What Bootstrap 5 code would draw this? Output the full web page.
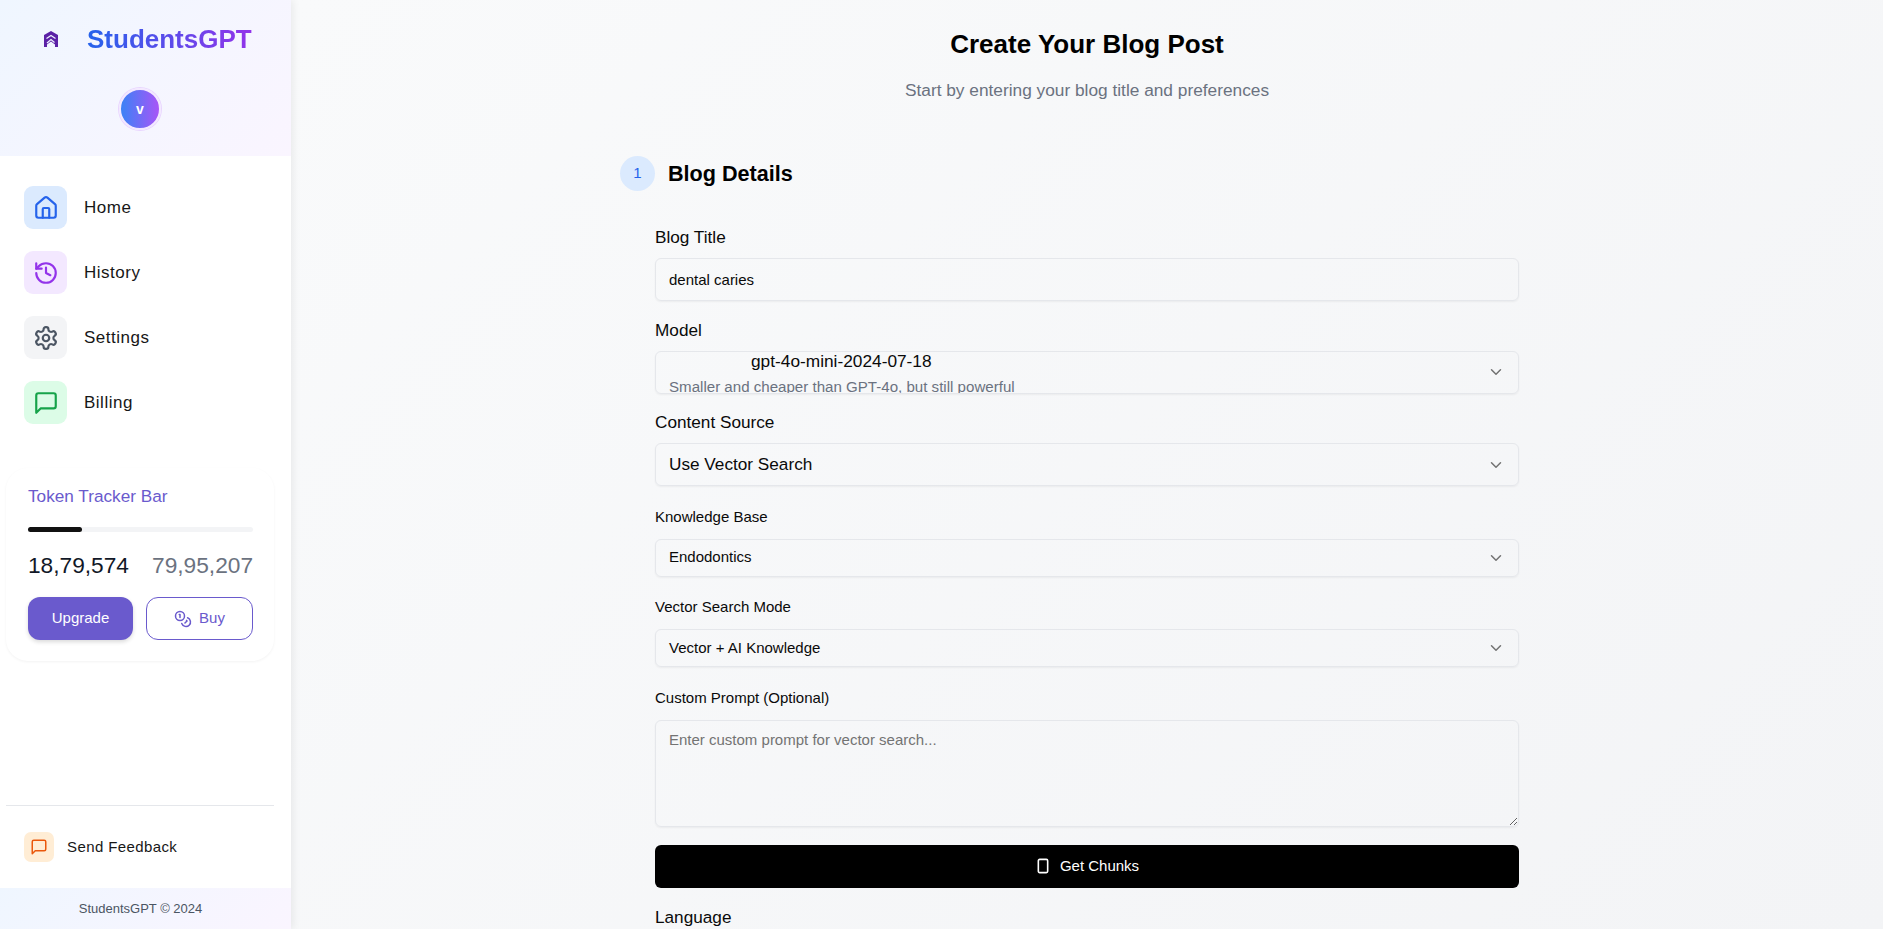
<!DOCTYPE html>
<html lang="en">
<head>
  <meta charset="UTF-8">
  <title>StudentsGPT</title>
  <link rel="stylesheet" href="https://cdn.jsdelivr.net/npm/bootstrap@5.3.3/dist/css/bootstrap.min.css">
  <style>
    html, body { height: 100%; }
    body { font-family: "Liberation Sans", Arial, sans-serif; color: #0a0a0a; overflow: hidden; background: #f6f7f9; }
    .app-shell { height: 929px; }
    .side-panel { width: 291px; flex: 0 0 291px; background: #fff; box-shadow: 2px 0 8px rgba(0,0,0,.07); z-index: 2; }
    .side-head { height: 156px; background: linear-gradient(135deg, #eff6ff, #faf5ff); padding-top: 20px; }
    .logo-line { height: 38px; padding-left: 44px; gap: 29px; }
    .logo-text { font-size: 26px; line-height: 38px; font-weight: 700; background: linear-gradient(90deg, #2563eb, #9333ea); -webkit-background-clip: text; background-clip: text; color: transparent; }
    .user-dot { width: 42px; height: 42px; margin: 30px 0 0 119px; border-radius: 50%; background: linear-gradient(90deg, #3b82f6, #a855f7); border: 2px solid #f3e8ff; box-shadow: 0 0 0 1px #e9d5ff; color: #fff; font-size: 14px; font-weight: 700; }
    .side-links { padding: 30px 24px 0 24px; gap: 22px; }
    .side-link { color: #171717; font-size: 17px; letter-spacing: .5px; gap: 17px; text-decoration: none; }
    .icon-tile { width: 43px; height: 43px; border-radius: 9px; }
    .tile-blue { background: #dbeafe; color: #2563eb; }
    .tile-purple { background: #f3e8ff; color: #9333ea; }
    .tile-gray { background: #f3f4f6; color: #4b5563; }
    .tile-green { background: #dcfce7; color: #16a34a; }
    .token-box { margin: 44px 0 0 6px; width: 268px; height: 193px; padding: 18px 21px 18px 22px; border-radius: 22px; background: #fff; box-shadow: 0 1px 3px rgba(0,0,0,.05); }
    .token-title { color: #6a5acd; font-size: 17.2px; line-height: 20px; }
    .token-track { height: 5px; margin-top: 20.5px; background: #f3f4f6; border-radius: 3px; }
    .token-fill { background: #111; border-radius: 3px; }
    .token-nums { font-size: 22.7px; line-height: 28px; margin-top: 19px; color: #111827; }
    .token-max { color: #6b7280; }
    .token-btns { margin-top: 18.5px; gap: 13px; }
    .btn-upgrade { width: 105px; height: 43px; background: #6a5acd; border: 0; border-radius: 12px; color: #fff; font-size: 15px; font-weight: 400; box-shadow: 0 2px 4px rgba(0,0,0,.15); }
    .btn-buy { width: 107px; height: 43px; background: #fff; border: 1px solid #6a5acd; border-radius: 12px; color: #6a5acd; font-size: 15px; gap: 7px; }
    .side-bottom { margin-top: auto; }
    .side-rule { margin: 0 17px 0 6px; border-top: 1px solid #e5e7eb; }
    .feedback-link { padding: 26px 24px; gap: 13px; color: #171717; font-size: 15px; letter-spacing: .4px; height: 82px; text-decoration: none; }
    .tile-orange { width: 30px; height: 30px; border-radius: 7px; background: #ffedd5; color: #ea580c; }
    .side-foot { height: 41px; padding-right: 10px; background: linear-gradient(135deg, #eff6ff, #faf5ff); color: #4b5563; font-size: 13px; }
    .main-area { background: linear-gradient(135deg, #f9fafb, #f3f4f6); min-width: 0; }
    .page-title { font-size: 26px; line-height: 32px; font-weight: 700; margin: 28px 0 0 0; color: #000; }
    .page-sub { font-size: 17.3px; line-height: 24px; color: #6b7280; margin: 18px 0 0 0; }
    .form-wrap { width: 934px; margin: 54px auto 0 auto; }
    .step-row { margin-bottom: 34px; }
    .step-dot { width: 35px; height: 35px; border-radius: 50%; background: #dbeafe; color: #2563eb; font-size: 15px; }
    .step-title { font-size: 21.6px; line-height: 28px; font-weight: 700; margin: 0 0 0 13px; color: #000; }
    .form-body { margin: 0 35px; }
    .field-group { margin-bottom: 16.5px; }
    .field-group-sm { margin-bottom: 20.5px; }
    .field-label { font-size: 17.2px; line-height: 24px; margin-bottom: 9px; color: #0a0a0a; display: block; }
    .field-label-sm { font-size: 15px; line-height: 20px; margin-bottom: 12px; color: #0a0a0a; display: block; }
    .field-input { height: 43px; background: transparent; border: 1px solid #e5e7eb; border-radius: 6px; font-size: 15px; padding: 0 13px; color: #0a0a0a; box-shadow: 0 1px 2px rgba(0,0,0,.05); }
    .pick-box { display: flex; align-items: center; justify-content: space-between; width: 100%; height: 43px; background: transparent; border: 1px solid #e5e7eb; border-radius: 6px; padding: 0 13px; color: #0a0a0a; text-align: left; font-size: 15px; box-shadow: 0 1px 2px rgba(0,0,0,.05); }
    .pick-box svg { color: #737373; flex: none; }
    .pick-tall { overflow: hidden; }
    .pick-lines { display: block; align-self: flex-start; }
    .pick-name { display: block; font-size: 17.3px; line-height: 18px; padding-left: 82px; }
    .pick-desc { display: block; font-size: 15.1px; line-height: 15px; color: #6b7280; margin-top: 9px; }
    .pick-big { font-size: 17.2px; }
    .pick-small { height: 38px; }
    .field-area { height: 107px; background: transparent; border: 1px solid #e5e7eb; border-radius: 6px; font-size: 15px; padding: 8px 13px; box-shadow: 0 1px 2px rgba(0,0,0,.05); }
    .field-area::placeholder { color: #737373; }
    .area-group { margin-bottom: 18px; }
    .btn-chunks { height: 43px; background: #000; border: 0; border-radius: 6px; color: #fff; font-size: 15px; gap: 9px; }
    .lang-group { margin-top: 17.5px; }
  </style>
</head>
<body>
<div class="app-shell d-flex">
  <aside class="side-panel d-flex flex-column">
    <div class="side-head">
      <div class="logo-line d-flex align-items-center">
        <svg width="14" height="16" viewBox="0 0 14 16"><path fill="#5b21a6" d="M7 0 L14 4 V16 H11 V13.500 L7 10.500 L3 13.500 V16 H0 V4 Z"/><path fill="none" stroke="#eef2ff" stroke-width="1.300" d="M2.500 7.500 L7 4.500 L11.500 7.500 M3 12 L7 8.500 L10.500 11.500"/></svg>
        <span class="logo-text">StudentsGPT</span>
      </div>
      <div class="user-dot d-flex align-items-center justify-content-center">v</div>
    </div>
    <nav class="side-links d-flex flex-column">
      <a class="side-link d-flex align-items-center" href="#">
        <span class="icon-tile tile-blue d-flex align-items-center justify-content-center">
          <svg width="26" height="26" viewBox="0 0 24 24" fill="none" stroke="currentColor" stroke-width="2" stroke-linecap="round" stroke-linejoin="round"><path d="M15 21v-8a1 1 0 0 0-1-1h-4a1 1 0 0 0-1 1v8"/><path d="M3 10a2 2 0 0 1 .709-1.528l7-5.999a2 2 0 0 1 2.582 0l7 5.999A2 2 0 0 1 21 10v9a2 2 0 0 1-2 2H5a2 2 0 0 1-2-2z"/></svg>
        </span>Home</a>
      <a class="side-link d-flex align-items-center" href="#">
        <span class="icon-tile tile-purple d-flex align-items-center justify-content-center">
          <svg width="26" height="26" viewBox="0 0 24 24" fill="none" stroke="currentColor" stroke-width="2" stroke-linecap="round" stroke-linejoin="round"><path d="M3 12a9 9 0 1 0 9-9 9.750 9.750 0 0 0-6.740 2.740L3 8"/><path d="M3 3v5h5"/><path d="M12 7v5l4 2"/></svg>
        </span>History</a>
      <a class="side-link d-flex align-items-center" href="#">
        <span class="icon-tile tile-gray d-flex align-items-center justify-content-center">
          <svg width="26" height="26" viewBox="0 0 24 24" fill="none" stroke="currentColor" stroke-width="2" stroke-linecap="round" stroke-linejoin="round"><path d="M12.220 2h-.44a2 2 0 0 0-2 2v.18a2 2 0 0 1-1 1.730l-.43.250a2 2 0 0 1-2 0l-.15-.080a2 2 0 0 0-2.730.730l-.220.380a2 2 0 0 0 .730 2.730l.150.100a2 2 0 0 1 1 1.720v.510a2 2 0 0 1-1 1.740l-.150.090a2 2 0 0 0-.730 2.730l.220.380a2 2 0 0 0 2.730.730l.150-.080a2 2 0 0 1 2 0l.430.250a2 2 0 0 1 1 1.730V20a2 2 0 0 0 2 2h.44a2 2 0 0 0 2-2v-.18a2 2 0 0 1 1-1.730l.430-.250a2 2 0 0 1 2 0l.150.080a2 2 0 0 0 2.730-.730l.220-.390a2 2 0 0 0-.730-2.730l-.150-.080a2 2 0 0 1-1-1.740v-.500a2 2 0 0 1 1-1.740l.150-.090a2 2 0 0 0 .730-2.730l-.220-.380a2 2 0 0 0-2.730-.730l-.150.080a2 2 0 0 1-2 0l-.430-.250a2 2 0 0 1-1-1.730V4a2 2 0 0 0-2-2z"/><circle cx="12" cy="12" r="3"/></svg>
        </span>Settings</a>
      <a class="side-link d-flex align-items-center" href="#">
        <span class="icon-tile tile-green d-flex align-items-center justify-content-center">
          <svg width="26" height="26" viewBox="0 0 24 24" fill="none" stroke="currentColor" stroke-width="2" stroke-linecap="round" stroke-linejoin="round"><path d="M21 15a2 2 0 0 1-2 2H7l-4 4V5a2 2 0 0 1 2-2h14a2 2 0 0 1 2 2z"/></svg>
        </span>Billing</a>
    </nav>
    <div class="token-box">
      <div class="token-title">Token Tracker Bar</div>
      <div class="token-track d-flex"><div class="token-fill" style="width:24%"></div></div>
      <div class="token-nums d-flex justify-content-between"><span>18,79,574</span><span class="token-max">79,95,207</span></div>
      <div class="token-btns d-flex">
        <button class="btn btn-upgrade p-0">Upgrade</button>
        <button class="btn btn-buy p-0 d-flex align-items-center justify-content-center">
          <svg width="18" height="18" viewBox="0 0 24 24" fill="none" stroke="currentColor" stroke-width="2" stroke-linecap="round" stroke-linejoin="round"><circle cx="8" cy="8" r="6"/><path d="M18.090 10.370A6 6 0 1 1 10.340 18"/><path d="M7 6h1v4"/><path d="m16.710 13.880.7.710-2.820 2.820"/></svg>Buy</button>
      </div>
    </div>
    <div class="side-bottom">
      <div class="side-rule"></div>
      <a class="feedback-link d-flex align-items-center" href="#">
        <span class="tile-orange d-flex align-items-center justify-content-center">
          <svg width="18" height="18" viewBox="0 0 24 24" fill="none" stroke="currentColor" stroke-width="2" stroke-linecap="round" stroke-linejoin="round"><path d="M21 15a2 2 0 0 1-2 2H7l-4 4V5a2 2 0 0 1 2-2h14a2 2 0 0 1 2 2z"/></svg>
        </span>Send Feedback</a>
      <div class="side-foot d-flex align-items-center justify-content-center">StudentsGPT © 2024</div>
    </div>
  </aside>
  <main class="main-area flex-grow-1">
    <div class="text-center">
      <h1 class="page-title">Create Your Blog Post</h1>
      <p class="page-sub">Start by entering your blog title and preferences</p>
    </div>
    <div class="form-wrap">
      <div class="step-row d-flex align-items-center">
        <span class="step-dot d-flex align-items-center justify-content-center">1</span>
        <h2 class="step-title">Blog Details</h2>
      </div>
      <form class="form-body" onsubmit="return false">
        <div class="field-group">
          <label class="field-label" for="blog-title">Blog Title</label>
          <input class="form-control field-input" id="blog-title" value="dental caries">
        </div>
        <div class="field-group">
          <label class="field-label">Model</label>
          <button class="pick-box pick-tall" type="button">
            <span class="pick-lines"><span class="pick-name">gpt-4o-mini-2024-07-18</span><span class="pick-desc">Smaller and cheaper than GPT-4o, but still powerful</span></span>
            <svg width="18" height="18" viewBox="0 0 24 24" fill="none" stroke="currentColor" stroke-width="2" stroke-linecap="round" stroke-linejoin="round"><path d="m6 9 6 6 6-6"/></svg>
          </button>
        </div>
        <div class="field-group-sm">
          <label class="field-label">Content Source</label>
          <button class="pick-box pick-big" type="button">Use Vector Search
            <svg width="18" height="18" viewBox="0 0 24 24" fill="none" stroke="currentColor" stroke-width="2" stroke-linecap="round" stroke-linejoin="round"><path d="m6 9 6 6 6-6"/></svg>
          </button>
        </div>
        <div class="field-group-sm">
          <label class="field-label-sm">Knowledge Base</label>
          <button class="pick-box pick-small" type="button">Endodontics
            <svg width="18" height="18" viewBox="0 0 24 24" fill="none" stroke="currentColor" stroke-width="2" stroke-linecap="round" stroke-linejoin="round"><path d="m6 9 6 6 6-6"/></svg>
          </button>
        </div>
        <div class="field-group-sm">
          <label class="field-label-sm">Vector Search Mode</label>
          <button class="pick-box pick-small" type="button">Vector + AI Knowledge
            <svg width="18" height="18" viewBox="0 0 24 24" fill="none" stroke="currentColor" stroke-width="2" stroke-linecap="round" stroke-linejoin="round"><path d="m6 9 6 6 6-6"/></svg>
          </button>
        </div>
        <div class="area-group">
          <label class="field-label-sm" for="custom-prompt">Custom Prompt (Optional)</label>
          <textarea class="form-control field-area" id="custom-prompt" placeholder="Enter custom prompt for vector search..."></textarea>
        </div>
        <button class="btn btn-chunks w-100 d-flex align-items-center justify-content-center" type="button">
          <svg width="16" height="16" viewBox="0 0 24 24" fill="none" stroke="currentColor" stroke-width="2.400" stroke-linecap="round" stroke-linejoin="round"><rect x="5" y="2" width="14" height="20" rx="2" ry="2"/></svg>Get Chunks</button>
        <div class="lang-group">
          <label class="field-label">Language</label>
        </div>
      </form>
    </div>
  </main>
</div>
<script src="https://cdn.jsdelivr.net/npm/bootstrap@5.3.3/dist/js/bootstrap.bundle.min.js"></script>
</body>
</html>
